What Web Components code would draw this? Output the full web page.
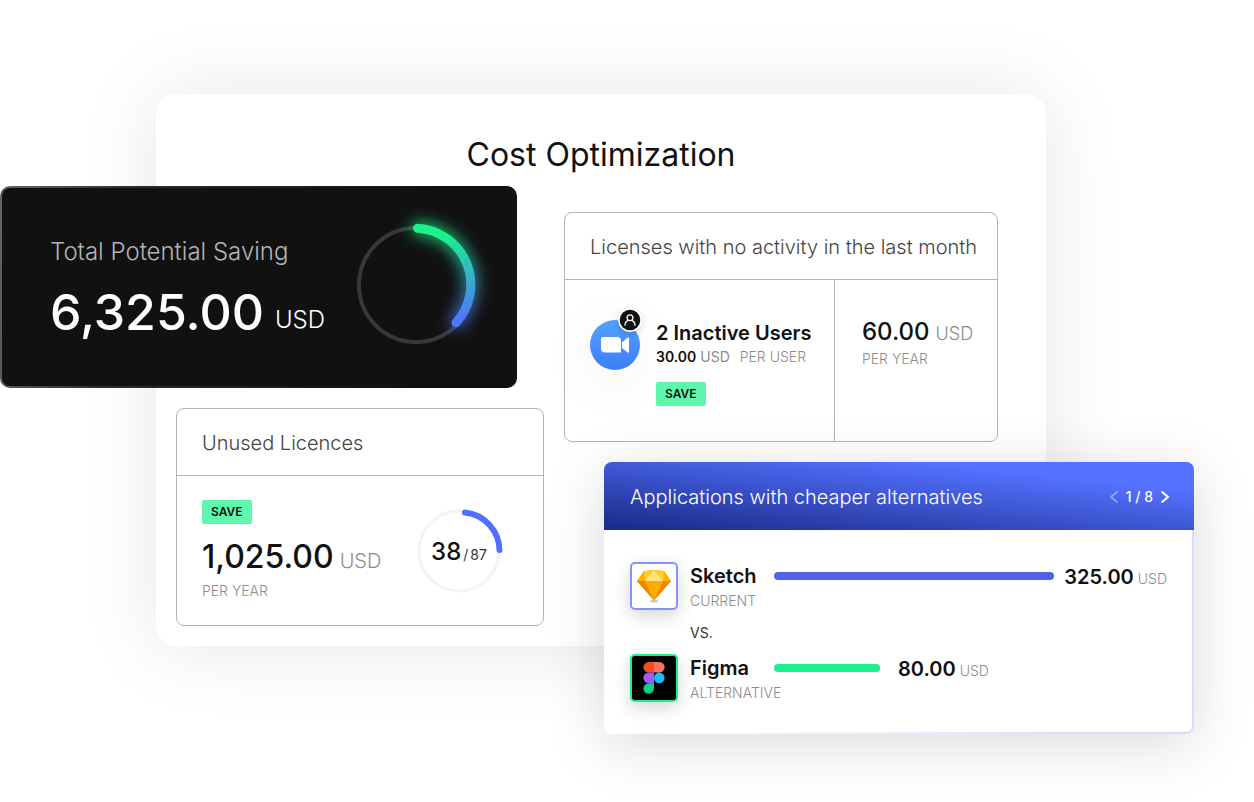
<!DOCTYPE html>
<html lang="en">
<head>
<meta charset="utf-8">
<meta name="viewport" content="width=device-width, initial-scale=1">
<title>Cost Optimization</title>
<style>
  body { margin: 0; background: #fff; color: #111; font-family: Inter, "Liberation Sans", sans-serif; }
</style>
</head>
<body>
<cost-board></cost-board>

<script>
const define = (name, html) => {
  const template = document.createElement('template');
  template.innerHTML = html;
  customElements.define(name, class extends HTMLElement {
    constructor() {
      super();
      this.attachShadow({ mode: 'open' }).append(template.content.cloneNode(true));
    }
  });
};

define('save-tag', `
<style>
  :host { display: block; width: fit-content; padding: 0 9px; border-radius: 2px; background: #5ff7ae;
    font-size: 12px; line-height: 24px; font-weight: 600; color: #111; }
</style>
<slot></slot>`);

define('outline-card', `
<style>
  :host { display: block; box-sizing: border-box; border: 1px solid #b4b4b4; border-radius: 8px; }
  h2 { margin: 0; padding: 2px 20px 0 25px; border-bottom: 1px solid #b4b4b4;
    font-size: 20px; line-height: 64px; font-weight: 300; color: #444; white-space: nowrap; }
</style>
<h2><slot name="title"></slot></h2>
<slot></slot>`);

define('money-amount', `
<style>
  :host { display: flex; align-items: baseline; gap: 6px; white-space: nowrap;
    font-size: 24px; line-height: 32px; font-weight: 500; color: #111; }
  .unit { font-size: var(--unit-size, 18px); line-height: 1; font-weight: 300; color: #8c8c8c; }
</style>
<span><slot></slot></span><span class="unit">USD</span>`);

define('saving-total', `
<style>
  :host { display: block; padding: 2px; border-radius: 10px;
    background: linear-gradient(100deg, #666 0%, #2c2c2c 25%, #111 80%); }
  .face { display: flex; align-items: flex-start; justify-content: space-between; height: 198px;
    padding: 0 40px 0 48px; border-radius: 8px; background: #111; }
  h2 { margin: 48px 0 12px; font-size: 24px; line-height: 32px; font-weight: 300; color: #b4b4b4; white-space: nowrap; }
  .sum { display: flex; align-items: flex-end; gap: 11px; color: #fff; white-space: nowrap; }
  .value { font-size: 50px; line-height: 64px; font-weight: 500; }
  .unit { font-size: 24px; line-height: 48px; font-weight: 300; }
  svg { display: block; flex: none; width: 118px; height: 118px; margin-top: 38px; overflow: visible; }
</style>
<div class="face">
  <div>
    <h2>Total Potential Saving</h2>
    <div class="sum"><span class="value">6,325.00</span><span class="unit">USD</span></div>
  </div>
  <svg viewBox="0 0 118 118" fill="none" aria-hidden="true">
    <defs>
      <linearGradient id="sweep" x1="70" y1="2" x2="84" y2="98" gradientUnits="userSpaceOnUse">
        <stop offset=".1" stop-color="#1cf08c"/><stop offset="1" stop-color="#4f74ff"/>
      </linearGradient>
      <filter id="glow" x="-60%" y="-40%" width="220%" height="180%"><feGaussianBlur stdDeviation="8"/></filter>
    </defs>
    <circle cx="59" cy="59" r="57" stroke="#383838" stroke-width="4"/>
    <path d="M60.500 2.300A56.400 56.400 0 0 1 99 96.700" stroke="url(#sweep)" stroke-width="11" stroke-linecap="round" filter="url(#glow)"/>
    <path d="M60.500 2.300A56.400 56.400 0 0 1 99 96.700" stroke="url(#sweep)" stroke-width="9" stroke-linecap="round"/>
  </svg>
</div>`);

define('unused-licences', `
<style>
  :host { display: block; }
  .body { display: flex; justify-content: space-between; padding: 24px 42px 24px 25px; }
  money-amount { margin-top: 12px; font-size: 32px; line-height: 42px; --unit-size: 20px; }
  .period { font-size: 14px; line-height: 20px; font-weight: 300; color: #8c8c8c; margin-top: 3px; }
  .dial { display: grid; place-items: center; flex: none; width: 84px; height: 84px; margin-top: 9px; }
  .dial > * { grid-area: 1 / 1; }
  svg { display: block; overflow: visible; }
  .count { display: flex; align-items: baseline; gap: 2px; padding-top: 2px; font-size: 24px; line-height: 32px; font-weight: 500; }
  .count small { font-size: 14px; line-height: 1; font-weight: 400; color: #333; }
</style>
<outline-card>
  <span slot="title">Unused Licences</span>
  <div class="body">
    <div>
      <save-tag>SAVE</save-tag>
      <money-amount>1,025.00</money-amount>
      <div class="period">PER YEAR</div>
    </div>
    <div class="dial">
      <svg width="84" height="84" viewBox="0 0 84 84" fill="none" aria-hidden="true">
        <circle cx="42" cy="42" r="40" stroke="#f3f3f3" stroke-width="3"/>
        <path d="M48 3.500A38.500 38.500 0 0 1 82.500 41" stroke="#5170ff" stroke-width="6" stroke-linecap="round"/>
      </svg>
      <div class="count"><span>38</span><small>/</small><small>87</small></div>
    </div>
  </div>
</outline-card>`);

define('zoom-user-icon', `
<style>
  :host { display: block; position: relative; width: 50px; height: 50px; border-radius: 50%;
    box-shadow: 0 10px 60px rgba(0, 0, 0, .07); }
  svg { display: block; }
  .badge { position: absolute; right: -2px; top: -12px; border-radius: 50%; box-shadow: 0 2px 6px rgba(0, 0, 0, .15); }
</style>
<svg width="50" height="50" viewBox="0 0 50 50" role="img" aria-label="Zoom">
  <defs><linearGradient id="sky" x1="0" y1="0" x2="0" y2="1"><stop stop-color="#559fff"/><stop offset="1" stop-color="#3c7ff8"/></linearGradient></defs>
  <circle cx="25" cy="25" r="25" fill="url(#sky)"/>
  <path d="M12.500 17H27a4 4 0 0 1 4 4v11.500H15a4 4 0 0 1-4-4V18.500a1.500 1.500 0 0 1 1.500-1.500z" fill="#fff"/>
  <path d="M32 22.500l5.700-4.900a.8.800 0 0 1 1.300.600V32a.8.800 0 0 1-1.300.6L32 28z" fill="#fff"/>
</svg>
<svg class="badge" width="24" height="24" viewBox="0 0 24 24" fill="none" aria-hidden="true">
  <circle cx="12" cy="12" r="12" fill="#fff"/><circle cx="12" cy="12" r="10.300" fill="#111"/>
  <circle cx="12" cy="9.800" r="2.900" stroke="#fff" stroke-width="1.300"/>
  <path d="M7 17.200c0-2.700 1.500-4.200 3.200-4.900M17 17.200c0-2.700-1.500-4.200-3.200-4.900" stroke="#fff" stroke-width="1.300" stroke-linecap="round"/>
</svg>`);

define('inactive-licenses', `
<style>
  :host { display: block; }
  .body { display: grid; grid-template-columns: minmax(0, 1fr) 162px; height: 161px; }
  .users { display: flex; gap: 16px; padding: 40px 0 0 25px; border-right: 1px solid #b4b4b4; white-space: nowrap; }
  h3 { margin: 0; font-size: 20px; line-height: 26px; font-weight: 600; }
  p { margin: 0; font-size: 14px; line-height: 22px; font-weight: 300; color: #8c8c8c; }
  b { font-weight: 600; color: #111; }
  .currency { font-weight: 400; margin-right: 6px; }
  save-tag { margin-top: 14px; }
  .year { padding: 36px 0 0 27px; }
</style>
<outline-card>
  <span slot="title">Licenses with no activity in the last month</span>
  <div class="body">
    <div class="users">
      <zoom-user-icon></zoom-user-icon>
      <div>
        <h3>2 Inactive Users</h3>
        <p><b>30.00</b> <span class="currency">USD</span> PER USER</p>
        <save-tag>SAVE</save-tag>
      </div>
    </div>
    <div class="year">
      <money-amount>60.00</money-amount>
      <p>PER YEAR</p>
    </div>
  </div>
</outline-card>`);

define('app-cost', `
<style>
  :host { display: flex; gap: 12px; }
  .icon { box-sizing: border-box; flex: none; display: grid; place-items: center; width: 48px; height: 48px;
    border: 2px solid var(--frame); border-radius: 5px; background: var(--tile, #fff);
    box-shadow: 0 6px 18px rgba(0, 0, 0, .16); }
  .info { flex: 1; min-width: 0; }
  .line { display: flex; align-items: center; height: 28px; }
  h3 { flex: none; margin: 0; width: 84px; font-size: 20px; line-height: 26px; font-weight: 600; }
  .bar { flex: var(--bar-flex); height: 8px; border-radius: 4px; background: var(--bar-color); margin-right: var(--bar-gap); }
  money-amount { padding-top: 2px; font-size: 20px; line-height: 26px; font-weight: 600; gap: 4px; --unit-size: 14px; }
  p { margin: 0; font-size: 14px; line-height: 22px; font-weight: 300; color: #8c8c8c; }
</style>
<div class="icon"><slot name="icon"></slot></div>
<div class="info">
  <div class="line">
    <h3><slot name="name"></slot></h3>
    <div class="bar"></div>
    <money-amount><slot name="cost"></slot></money-amount>
  </div>
  <p><slot name="role"></slot></p>
</div>`);

define('cheaper-apps', `
<style>
  :host { display: block; border-radius: 8px; box-shadow: 0 10px 60px rgba(0, 0, 0, .15);
    background: linear-gradient(100deg, #fff 20%, #d5ddff 85%); }
  header { box-sizing: border-box; display: flex; align-items: center; justify-content: space-between; height: 68px; padding: 2px 24px 0 26px;
    border-radius: 8px 8px 0 0; background: linear-gradient(6deg, #182985 0%, #5471ff 77%); color: #fff; }
  h2 { margin: 0; font-size: 20px; line-height: 26px; font-weight: 300; white-space: nowrap; }
  nav { display: flex; align-items: center; gap: 7px; font-size: 14px; font-weight: 500; line-height: 20px; white-space: nowrap; }
  button { display: block; padding: 0; border: 0; background: none; color: inherit; }
  button:disabled { opacity: .4; }
  svg { display: block; }
  .frame { padding: 0 2px 2px 0; }
  .body { padding: 32px 25px 28px 26px; background: #fff; border-radius: 0 0 6px 8px; }
  .versus { margin: 8px 0; padding-left: 60px; font-size: 14px; line-height: 26px; color: #333; font-weight: 400; }
  .current { --frame: #8891f5; --bar-color: #5063e6; --bar-flex: 1 1 0; --bar-gap: 10px; }
  .other { --frame: #1cf08c; --tile: #000; --bar-color: #1cf08c; --bar-flex: 0 0 106px; --bar-gap: 18px; }
</style>
<header>
  <h2>Applications with cheaper alternatives</h2>
  <nav aria-label="Alternatives">
    <button disabled aria-label="Previous"><svg width="10" height="14" viewBox="0 0 10 14" fill="none" stroke="currentColor" stroke-width="1.800"><path d="M8.500 1.500L2 7l6.500 5.500"/></svg></button>
    <span>1 / 8</span>
    <button aria-label="Next"><svg width="10" height="14" viewBox="0 0 10 14" fill="none" stroke="currentColor" stroke-width="2"><path d="M1.500 1.500L8 7l-6.500 5.500"/></svg></button>
  </nav>
</header>
<div class="frame">
  <div class="body">
    <app-cost class="current">
      <svg slot="icon" width="36" height="36" viewBox="0 0 36 36" role="img" aria-label="Sketch logo">
        <ellipse cx="18" cy="33" rx="4" ry="1.500" fill="#ccc"/>
        <path d="M8 3L18 2l10 1 7 10-17 19.500L1 13z" fill="#fdad00"/>
        <path d="M1 13h8l9 19.500z" fill="#f28200"/><path d="M35 13h-8l-9 19.500z" fill="#f28200"/>
        <path d="M9 13h18l-9 19.500z" fill="#feac00"/>
        <path d="M8 3L1 13h8z" fill="#fdb200"/><path d="M28 3l7 10h-8z" fill="#fdb200"/>
        <path d="M8 3l10-1L9 13zM28 3L18 2l9 11z" fill="#fdcf22"/>
        <path d="M18 2L9 13h18z" fill="#fee586"/>
      </svg>
      <span slot="name">Sketch</span><span slot="cost">325.00</span><span slot="role">CURRENT</span>
    </app-cost>
    <div class="versus">VS.</div>
    <app-cost class="other">
      <svg slot="icon" width="22" height="32" viewBox="0 0 22 32" role="img" aria-label="Figma logo">
        <path d="M11 0v10.600H5.700a5.300 5.300 0 0 1 0-10.600z" fill="#f24e1e"/>
        <path d="M11 0h5.300a5.300 5.300 0 0 1 0 10.600H11z" fill="#ff7262"/>
        <path d="M11 10.600v10.600H5.700a5.300 5.300 0 0 1 0-10.600z" fill="#a259ff"/>
        <circle cx="16.300" cy="15.900" r="5.300" fill="#1abcfe"/>
        <path d="M11 21.200v5.300a5.300 5.300 0 1 1-5.300-5.300z" fill="#0acf83"/>
      </svg>
      <span slot="name">Figma</span><span slot="cost">80.00</span><span slot="role">ALTERNATIVE</span>
    </app-cost>
  </div>
</div>`);

/* The panel and the two card stacks share one grid row, so the cards overhang the panel's edges. */
define('cost-board', `
<style>
  :host { display: grid; padding-bottom: 68px;
    grid-template-columns: minmax(0, 156fr) minmax(0, 388fr) 20px minmax(0, 482fr) minmax(0, 148fr) minmax(0, 60fr); }
  .panel { grid-area: 1 / 2 / 2 / 5; margin: 94px 0 88px; border-radius: 20px; background: #fff;
    box-shadow: 0 0 80px rgba(0, 0, 0, .1); }
  h1 { margin: 40px 0 0; text-align: center; font-size: 32px; line-height: 42px; font-weight: 400; }
  .stack { display: grid; grid-template-columns: subgrid; align-content: start; row-gap: 20px; }
  .left { grid-area: 1 / 1 / 2 / 3; margin-top: 186px; }
  .right { grid-area: 1 / 4 / 2 / 6; margin-top: 212px; }
  saving-total { grid-column: 1 / 3; margin-right: 27px; }
  unused-licences { grid-column: 2; margin-left: 20px; }
  inactive-licenses { grid-column: 1; margin-right: 48px; }
  cheaper-apps { grid-column: 1 / 3; margin-left: 40px; }
</style>
<section class="panel"><h1>Cost Optimization</h1></section>
<div class="stack left">
  <saving-total></saving-total>
  <unused-licences></unused-licences>
</div>
<div class="stack right">
  <inactive-licenses></inactive-licenses>
  <cheaper-apps></cheaper-apps>
</div>`);
</script>
</body>
</html>
